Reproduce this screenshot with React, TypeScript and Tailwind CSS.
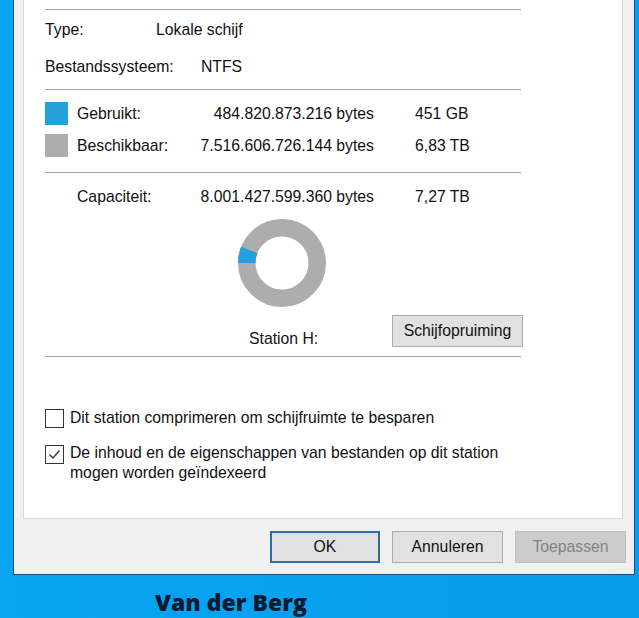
import React from 'react';

// Eigenschappen-dialoog van een station (Windows-stijl), tabblad Algemeen

const Separator = () => <div className="h-px w-[476px] bg-[#a0a0a0]" />;

const UsageDonut: React.FC<{ usedFraction: number }> = ({ usedFraction }) => {
  const c = 44;
  const r = 35.25;
  const start = Math.PI;
  const end = Math.PI + usedFraction * 2 * Math.PI;
  const x1 = c + r * Math.cos(start);
  const y1 = c + r * Math.sin(start);
  const x2 = c + r * Math.cos(end);
  const y2 = c + r * Math.sin(end);
  return (
    <svg width="88" height="88" viewBox="0 0 88 88">
      <circle cx={c} cy={c} r={r} fill="none" stroke="#adadad" strokeWidth="17.5" />
      <path
        d={`M ${x1} ${y1} A ${r} ${r} 0 0 1 ${x2} ${y2}`}
        fill="none"
        stroke="#26a0da"
        strokeWidth="17.5"
      />
    </svg>
  );
};

const Checkbox: React.FC<{ checked?: boolean }> = ({ checked }) => (
  <div className="w-[19px] h-[19px] shrink-0 border border-[#333333] bg-white flex items-center justify-center">
    {checked && (
      <svg width="17" height="17" viewBox="0 0 17 17">
        <path d="M3.5 8.5 L7 12 L13.5 4.5" fill="none" stroke="#333333" strokeWidth="1.4" />
      </svg>
    )}
  </div>
);

export default function App() {
  return (
    <div className="w-[639px] h-[618px] overflow-hidden bg-gradient-to-r from-[#05a5f2] to-[#0a9cec] font-['Liberation_Sans',Arial,sans-serif] text-[15.75px] text-[#111111]">
      {/* Dialoog */}
      <div className="ml-[13px] w-[622px] border-x border-b border-[#1d4f78] bg-[#f0f0f0] pl-[9px] pr-[8px] pb-[11px]">
        {/* Witte paneel */}
        <div className="w-[600px] h-[519px] bg-white border-x border-b border-[#d9d9d9] pl-[21px]">
          <div className="pt-[9px]">
            <Separator />
          </div>

          <div className="mt-[10px] flex h-[20px] items-center">
            <span className="w-[111px]">Type:</span>
            <span>Lokale schijf</span>
          </div>
          <div className="mt-[17px] flex h-[20px] items-center">
            <span className="w-[156px]">Bestandssysteem:</span>
            <span>NTFS</span>
          </div>

          <div className="mt-[12px]">
            <Separator />
          </div>

          <div className="mt-[12px] flex h-[23px] items-center">
            <div className="w-[23px] h-[23px] bg-[#26a0da]" />
            <span className="ml-[9px] w-[100px]">Gebruikt:</span>
            <span className="w-[197px] text-right">484.820.873.216 bytes</span>
            <span className="ml-[41px]">451 GB</span>
          </div>
          <div className="mt-[9px] flex h-[23px] items-center">
            <div className="w-[23px] h-[23px] bg-[#adadad]" />
            <span className="ml-[9px] w-[100px]">Beschikbaar:</span>
            <span className="w-[197px] text-right">7.516.606.726.144 bytes</span>
            <span className="ml-[41px]">6,83 TB</span>
          </div>

          <div className="mt-[15px]">
            <Separator />
          </div>

          <div className="mt-[14px] flex h-[20px] items-center">
            <span className="ml-[32px] w-[100px]">Capaciteit:</span>
            <span className="w-[197px] text-right">8.001.427.599.360 bytes</span>
            <span className="ml-[41px]">7,27 TB</span>
          </div>

          <div className="mt-[12px] ml-[193px]">
            <UsageDonut usedFraction={451 / 7450} />
          </div>

          <div className="mt-[8px] flex items-end">
            <span className="ml-[204px] w-[143px] leading-[17px]">Station H:</span>
            <button className="w-[131px] h-[32px] bg-[#e1e1e1] border border-[#adadad]">
              Schijfopruiming
            </button>
          </div>

          <div className="mt-[9px]">
            <Separator />
          </div>

          <div className="mt-[51px] flex items-center gap-[6px]">
            <Checkbox />
            <span className="leading-[20px]">Dit station comprimeren om schijfruimte te besparen</span>
          </div>
          <div className="mt-[17px] flex items-start gap-[6px]">
            <Checkbox checked />
            <span className="-mt-[2px] leading-[20px]">
              De inhoud en de eigenschappen van bestanden op dit station
              <br />
              mogen worden geïndexeerd
            </span>
          </div>
        </div>

        {/* Knoppen */}
        <div className="mt-[12px] flex justify-end gap-[12px]">
          <button className="w-[110px] h-[32px] bg-[#e1e1e1] border-2 border-[#2f6ea5]">OK</button>
          <button className="w-[111px] h-[32px] bg-[#e1e1e1] border border-[#adadad]">Annuleren</button>
          <button className="w-[111px] h-[32px] bg-[#cccccc] border border-[#bfbfbf] text-[#838383]">
            Toepassen
          </button>
        </div>
      </div>

      <div className="mt-[16px] ml-[155px] font-['Open_Sans',sans-serif] font-extrabold text-[23px] leading-[23px] text-[#0a1a33]">
        Van der Berg
      </div>
    </div>
  );
}
